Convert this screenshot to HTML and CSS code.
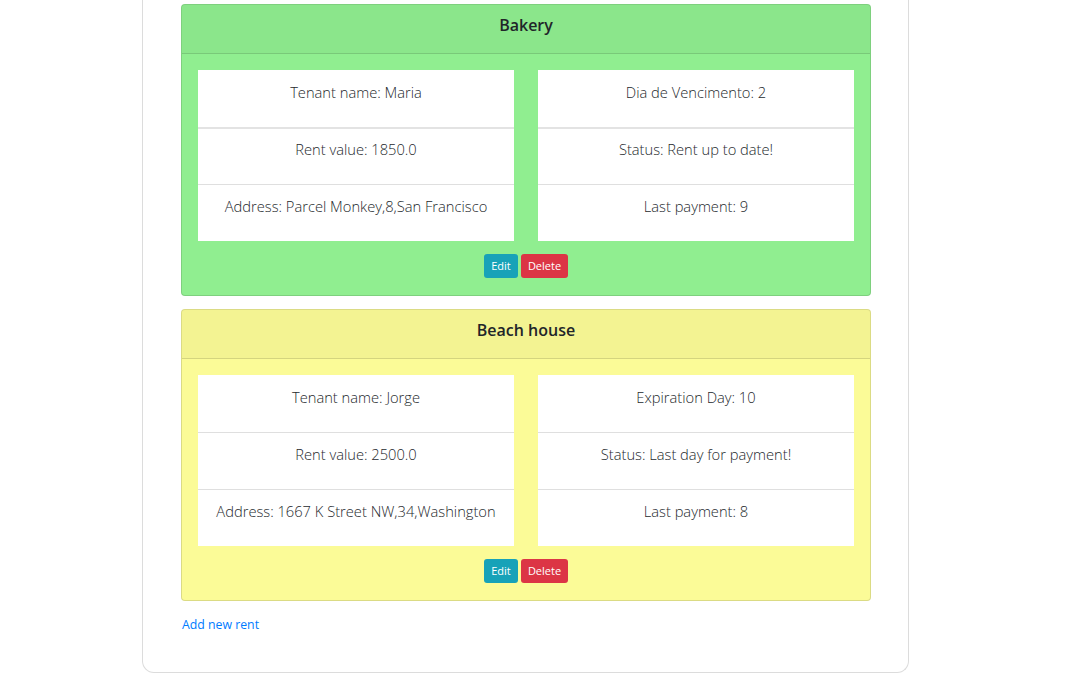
FILE: index.html
```html
<!DOCTYPE html>
<html>
<head>
<meta charset="utf-8">
<link rel="stylesheet" href="styles.css">
</head>
<body>
<div class="page">
  <div class="outer">
    <div class="rent-card green">
      <div class="rent-header">Bakery</div>
      <div class="rent-body">
        <div class="lists">
          <ul class="list">
            <li class="item">Tenant name: Maria</li>
            <li class="item first-sep">Rent value: 1850.0</li>
            <li class="item">Address: Parcel Monkey,8,San Francisco</li>
          </ul>
          <ul class="list">
            <li class="item">Dia de Vencimento: 2</li>
            <li class="item first-sep">Status: Rent up to date!</li>
            <li class="item">Last payment: 9</li>
          </ul>
        </div>
        <div class="actions">
          <button class="btn btn-info">Edit</button>
          <button class="btn btn-danger">Delete</button>
        </div>
      </div>
    </div>
    <div class="rent-card yellow">
      <div class="rent-header">Beach house</div>
      <div class="rent-body">
        <div class="lists">
          <ul class="list">
            <li class="item">Tenant name: Jorge</li>
            <li class="item">Rent value: 2500.0</li>
            <li class="item">Address: 1667 K Street NW,34,Washington</li>
          </ul>
          <ul class="list">
            <li class="item">Expiration Day: 10</li>
            <li class="item">Status: Last day for payment!</li>
            <li class="item">Last payment: 8</li>
          </ul>
        </div>
        <div class="actions">
          <button class="btn btn-info">Edit</button>
          <button class="btn btn-danger">Delete</button>
        </div>
      </div>
    </div>
    <a class="add-link" href="#">Add new rent</a>
  </div>
</div>
</body>
</html>
```

FILE: styles.css
```css
* { box-sizing: border-box; }
html, body { margin: 0; padding: 0; background: #fff; }
body {
  font-family: "Open Sans", "Noto Sans", "Liberation Sans", sans-serif;
  color: #212529;
  width: 1077px;
  height: 683px;
  overflow: hidden;
}
.page {
  padding-left: 142px;
}
.outer {
  width: 767px;
  border: 1px solid #dcdcdc;
  border-top: none;
  border-radius: 0 0 12px 12px;
  padding: 4px 37px 36px 38px;
}
.rent-card {
  border: 1px solid rgba(0,0,0,0.125);
  border-radius: 4px;
  margin-bottom: 13px;
  overflow: hidden;
}
.green { background: #90ee90; }
.yellow { background: #fbfb97; }
.rent-header {
  height: 49px;
  padding: 8px 20px 16px;
  text-align: center;
  font-weight: 600;
  font-size: 16px;
  line-height: 24px;
  background: rgba(0,0,0,0.03);
  border-bottom: 1px solid rgba(0,0,0,0.125);
  color: #212529;
}
.rent-body {
  padding: 16px 16px 17px;
}
.lists {
  display: flex;
  gap: 24px;
}
.list {
  list-style: none;
  margin: 0;
  padding: 0;
  width: 316px;
  background: #fff;
}
.item {
  height: 57px;
  padding: 10px 8px 0;
  text-align: center;
  font-size: 14.7px;
  font-weight: 300;
  line-height: 22px;
  color: #25292d;
  border-top: 1px solid rgba(0,0,0,0.125);
  white-space: nowrap;
}
.item:first-child { border-top: none; padding-top: 11px; }
.item.first-sep { border-top: 2px solid rgba(0,0,0,0.11); padding-top: 9px; }
.actions {
  display: flex;
  justify-content: center;
  gap: 3px;
  margin-top: 13px;
}
.btn {
  font-family: "Open Sans", "Noto Sans", sans-serif;
  font-size: 11px;
  line-height: 16px;
  height: 24px;
  padding: 4px 8px;
  border: none;
  border-radius: 3px;
  color: #fff;
}
.btn-info { background: #17a2b8; width: 34px; padding: 4px 0; }
.btn-danger { background: #dc3545; width: 47px; padding: 4px 0; }
.add-link {
  display: block;
  margin-top: 13px;
  margin-left: 1px;
  font-size: 12.3px;
  line-height: 22px;
  color: #007bff;
  text-decoration: none;
}
```
